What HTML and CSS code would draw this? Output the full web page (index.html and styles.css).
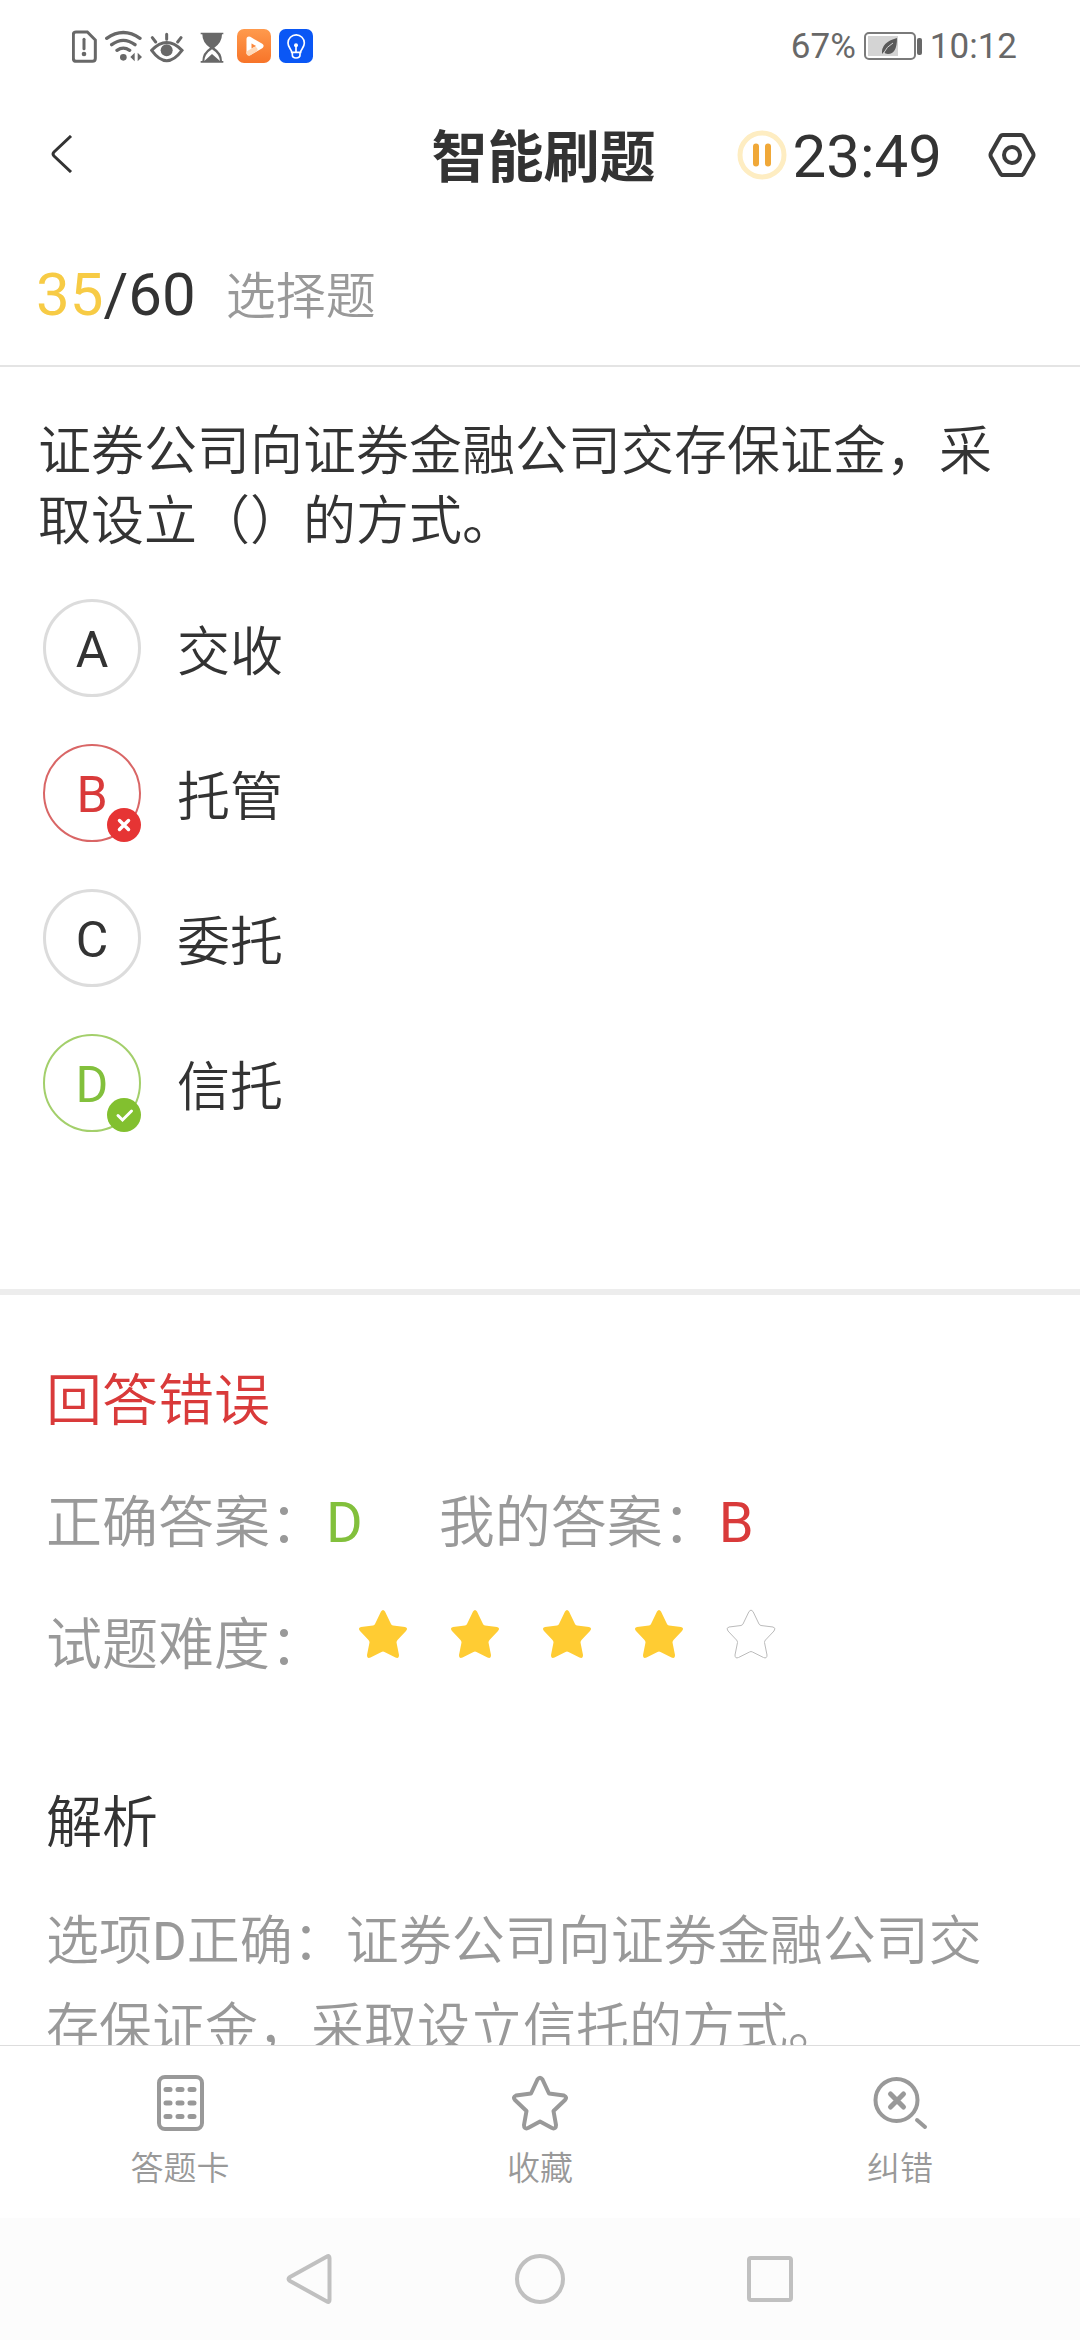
FILE: index.html
```html
<!DOCTYPE html>
<html lang="zh-CN">
<head>
<meta charset="utf-8">
<meta name="viewport" content="width=device-width, initial-scale=1">
<title>智能刷题</title>
<link rel="stylesheet" href="styles.css">
</head>
<body>
<div class="statusbar">
  <div class="status-icons">
    <svg width="25" height="33" viewBox="65 54 75 99" fill="none" stroke="#686868" stroke-width="9"><path d="M75 60H111L135 84V139Q135 148 126 148H78Q69 148 69 139V68Q69 60 77 60Z"/><path d="M101 82V110" stroke-width="9" stroke-linecap="round"/><circle cx="101" cy="126" r="7" fill="#686868" stroke="none"/></svg>
    <svg width="37" height="33" viewBox="166 54 111 99" fill="none" stroke="#686868" stroke-width="10" stroke-linecap="round"><path d="M171 79Q221 44 271 79M186 98Q221 72 256 98M202 115Q221 102 240 115"/><circle cx="221" cy="136" r="10" fill="#686868" stroke="none"/><path d="M242 135L255 122V148ZM264 122L277 135L264 148Z" fill="#686868" stroke="none"/></svg>
    <svg width="34" height="33" viewBox="305 54 102 99" fill="none" stroke="#686868" stroke-width="9" stroke-linecap="round"><path d="M310 115Q355 68 401 115Q355 177 310 115ZM355 67V82M312 77L322 90M398 77L388 90"/><circle cx="355" cy="115" r="18" fill="#686868" stroke="none"/></svg>
    <svg class="icon-hourglass" width="24" height="33" viewBox="450 54 72 99"><path d="M452 62H520V67H516Q516 92 493 107Q516 122 516 147H520V152H452V147H457Q457 122 480 107Q457 92 457 67H452Z" fill="#686868"/><path d="M463 147Q464 126 486 112Q508 126 510 147L486 126Z" fill="#fff"/></svg>
    <svg width="34" height="34" viewBox="1 1 34 34"><defs><linearGradient id="orange" x2="0" y2="1"><stop stop-color="#ff9a4d"/><stop offset="1" stop-color="#f77429"/></linearGradient></defs><rect x="1" y="1" width="34" height="34" rx="7" fill="url(#orange)"/><path d="M13 11L25 18L13 25Z" fill="none" stroke="#fff" stroke-width="5" stroke-linejoin="round"/><path d="M13 25L19 21.500" stroke="#ffd9b8" stroke-width="5" stroke-linecap="round"/></svg>
    <svg width="34" height="34" viewBox="687 57 102 102"><rect x="687" y="57" width="102" height="102" rx="20" fill="#0a57f5"/><path d="M725 127C725 118 714 113 714 99A24 24 0 0 1 763 99C763 113 752 118 752 127ZM727 128V135Q727 144 738 144Q750 144 750 135V128M738 106V126" fill="none" stroke="#fff" stroke-width="5"/><circle cx="738" cy="106" r="6" fill="#fff"/></svg>
  </div>
  <div class="status-info">
    <span>67%</span>
    <svg width="58" height="28" viewBox="0 0 58 28"><rect x="1" y="1" width="50" height="26" rx="4" fill="none" stroke="#7a7a7a" stroke-width="2"/><rect x="4" y="4" width="30" height="20" fill="#d4d4d4"/><path d="M33 6Q33 22 24 22Q21 22 20 20L18 22Q17 10 33 6Z" fill="#595959"/><path d="M19 22Q23 14 29 11" fill="none" stroke="#d4d4d4"/><rect x="53" y="6" width="5" height="17" rx="2" fill="#686868"/></svg>
    <time>10:12</time>
  </div>
</div>

<header class="header">
  <div class="header-left">
    <button class="icon-button" aria-label="返回"><svg width="22" height="38" viewBox="0 0 22 38" fill="none" stroke="#333" stroke-width="3"><path d="M20 1L3 17Q1 19 3 21L20 37"/></svg></button>
  </div>
  <h1 class="title">智能刷题</h1>
  <div class="header-right">
    <button class="timer" aria-label="暂停计时"><svg width="50" height="50" viewBox="0 0 50 50"><circle cx="25" cy="25" r="22" fill="none" stroke="#feedc2" stroke-width="5"/><path d="M19 16.500V33.500M31 16.500V33.500" stroke="#f0a838" stroke-width="6" stroke-linecap="round"/></svg><span>23:49</span></button>
    <button class="icon-button" aria-label="设置"><svg width="48" height="46" viewBox="0 0 48 46" fill="none" stroke="#3b3b3b" stroke-width="4"><path d="M15 3H33Q35 3 36 5L45 21Q46 23 45 25L36 41Q35 43 33 43H15Q13 43 12 41L3 25Q2 23 3 21L12 5Q13 3 15 3Z"/><circle cx="24" cy="23" r="8"/></svg></button>
  </div>
</header>

<main class="content">
  <div class="progress">
    <span class="count"><em>35</em>/60</span>
    <span class="kind">选择题</span>
  </div>

  <section class="question">
    <p class="stem">证券公司向证券金融公司交存保证金，采取设立（）的方式。</p>
    <ul class="options">
      <li><button class="option"><span class="letter">A</span><span class="label">交收</span></button></li>
      <li><button class="option wrong"><span class="letter">B<svg class="badge" viewBox="0 0 34 34"><circle cx="17" cy="17" r="17" fill="#e63434"/><path d="M12.500 12.500L21.500 21.500M21.500 12.500L12.500 21.500" stroke="#fff" stroke-width="3.500" stroke-linecap="round"/></svg></span><span class="label">托管</span></button></li>
      <li><button class="option"><span class="letter">C</span><span class="label">委托</span></button></li>
      <li><button class="option right"><span class="letter">D<svg class="badge" viewBox="0 0 34 34"><circle cx="17" cy="17" r="17" fill="#82c02f"/><path d="M11 17.500L15.500 22L24.500 13" fill="none" stroke="#fff" stroke-width="3" stroke-linecap="round"/></svg></span><span class="label">信托</span></button></li>
    </ul>
  </section>

  <section class="result">
    <h2 class="verdict">回答错误</h2>
    <div class="answers">
      <span>正确答案：<b class="green">D</b></span>
      <span>我的答案：<b class="red">B</b></span>
    </div>
    <div class="difficulty">
      <span>试题难度：</span>
      <svg class="symbols" width="0" height="0"><symbol id="star" viewBox="0 0 50 50"><path d="M23 2.500Q25 -.5 27 2.500L33 15Q33.500 16 35 16.500L47 18Q50.500 19 48 22L39.500 31Q38.500 32 38.500 33.500L41 46Q41 50 37.500 48.500L26.500 43Q25 42 23.500 43L12.500 48.500Q9 50 9 46L11.500 33.500Q11.500 32 10.500 31L2 22Q-.5 19 3 18L15 16.500Q16.500 16 17 15Z"/></symbol></svg>
      <div class="stars" role="img" aria-label="难度四星">
        <svg class="star"><use href="#star"/></svg>
        <svg class="star"><use href="#star"/></svg>
        <svg class="star"><use href="#star"/></svg>
        <svg class="star"><use href="#star"/></svg>
        <svg class="star empty"><use href="#star"/></svg>
      </div>
    </div>
    <h2 class="analysis-title">解析</h2>
    <p class="analysis">选项D正确：证券公司向证券金融公司交存保证金，采取设立信托的方式。</p>
  </section>
</main>

<nav class="tabs">
  <button class="tab"><svg width="56" height="56" viewBox="0 0 56 56" fill="none" stroke="#999" stroke-width="4"><rect x="7" y="2" width="43" height="52" rx="6"/><path d="M14 14.500H18M26 14.500H30M38 14.500H42M14 28H18M26 28H30M38 28H42M14 41.500H18M26 41.500H30M38 41.500H42" stroke-width="5" stroke-linecap="round"/></svg><span>答题卡</span></button>
  <button class="tab"><svg width="56" height="56" viewBox="0 0 56 56" fill="none" stroke="#999" stroke-width="4" stroke-linejoin="round"><path d="M25.500 4.500Q28 1 30.500 4.500L37 18.500L52 20.500Q55.500 22 53 25L41.500 36L44 50Q44 54.500 40 53L28 46.500L16 53Q12 54.500 12 50L14.500 36L3 25Q.5 22 4 20.500L19 18.500Z"/></svg><span>收藏</span></button>
  <button class="tab"><svg width="56" height="56" viewBox="0 0 56 56" fill="none" stroke="#999" stroke-width="4" stroke-linecap="round"><circle cx="24.500" cy="25" r="21"/><path d="M18.500 19L31.500 32M31.500 19L18.500 32" stroke-width="5"/><path d="M45 45L53 52"/></svg><span>纠错</span></button>
</nav>

<div class="navbar">
  <button class="icon-button" aria-label="系统返回"><svg width="50" height="50" viewBox="0 0 50 50" fill="none" stroke="#c0c0c0" stroke-width="4" stroke-linejoin="round"><path d="M42 2.500Q44.500 1 44.500 4V46Q44.500 49 42 47.500L5 27Q2 25 5 23Z"/></svg></button>
  <button class="icon-button" aria-label="主屏幕"><svg width="50" height="50" viewBox="0 0 50 50" fill="none" stroke="#c0c0c0" stroke-width="4"><circle cx="25" cy="25" r="23"/></svg></button>
  <button class="icon-button" aria-label="最近任务"><svg width="50" height="50" viewBox="0 0 50 50" fill="none" stroke="#c0c0c0" stroke-width="4"><rect x="4" y="4" width="42" height="42" rx="2"/></svg></button>
</div>
</body>
</html>
```
FILE: styles.css
```css
* {
  box-sizing: border-box;
}

body {
  display: flex;
  flex-direction: column;
  height: 100vh;
  margin: 0;
  background: #fff;
  color: #333;
  font-family: Roboto, "Noto Sans CJK SC DemiLight", "Noto Sans CJK SC", sans-serif;
  font-size: 53px;
  text-spacing-trim: space-all;
}

button {
  padding: 0;
  border: 0;
  background: none;
  color: inherit;
  font: inherit;
  text-align: left;
}

svg {
  display: block;
  flex: none;
}

h1,
h2,
p,
ul {
  margin: 0;
  padding: 0;
}

.statusbar {
  display: flex;
  justify-content: space-between;
  align-items: center;
  flex: none;
  height: 92px;
  padding: 0 63px 0 72px;
  color: #686868;
  font-size: 35px;
}

.status-icons,
.status-info {
  display: flex;
  align-items: center;
  gap: 8px;
}

.icon-hourglass {
  margin: 0 5px 0 8px;
}

.header {
  display: grid;
  grid-template-columns: 1fr auto 1fr;
  align-items: center;
  flex: none;
  height: 126px;
  padding: 0 44px 0 51px;
}

.title {
  padding-top: 6px;
  font-family: Roboto, "Noto Sans CJK SC", sans-serif;
  font-size: 56px;
  font-weight: 700;
  line-height: 80px;
}

.header-right {
  display: flex;
  justify-content: flex-end;
  align-items: center;
  gap: 46px;
}

.timer {
  display: flex;
  align-items: center;
  gap: 6px;
  font-size: 60px;
  line-height: 70px;
}

.timer span {
  padding-top: 4px;
}

.content {
  flex: 1;
  min-height: 0;
  overflow-y: auto;
  scrollbar-width: none;
}

.progress {
  display: flex;
  align-items: center;
  gap: 30px;
  height: 149px;
  padding: 0 36px;
  border-bottom: 2px solid #e4e4e4;
}

.count {
  padding-top: 6px;
  font-size: 60px;
}

.count em {
  color: #f7cb45;
  font-style: normal;
}

.kind {
  color: #999;
  font-size: 50px;
}

.question {
  padding: 50px 38px 157px;
  border-bottom: 6px solid #ededed;
}

.stem {
  line-height: 70px;
}

.options {
  display: flex;
  flex-direction: column;
  gap: 47px;
  margin-top: 42px;
  padding-left: 5px;
  list-style: none;
}

.option {
  display: flex;
  align-items: center;
  gap: 36px;
  width: 100%;
}

.label {
  padding-top: 10px;
  line-height: 88px;
}

.letter {
  display: flex;
  justify-content: center;
  align-items: center;
  position: relative;
  width: 98px;
  height: 98px;
  padding-top: 3px;
  border: 3px solid #dcdcdc;
  border-radius: 50%;
  font-size: 50px;
}

.wrong .letter {
  border: 2px solid #d96666;
  color: #d93a3a;
}

.right .letter {
  border: 2px solid #a3cf6b;
  color: #82c03c;
}

.badge {
  position: absolute;
  right: -2px;
  bottom: -2px;
  width: 34px;
  height: 34px;
}

.result {
  padding: 65px 46px;
  color: #999;
}

.verdict,
.answers,
.difficulty,
.analysis-title {
  font-size: 56px;
  font-weight: 400;
  line-height: 82px;
}

.verdict,
.red {
  color: #d93a3a;
}

.green {
  color: #82c03c;
}

.answers {
  display: flex;
  gap: 76px;
  margin-top: 40px;
}

.answers b {
  font-weight: 400;
}

.difficulty {
  display: flex;
  margin-top: 40px;
}

.symbols {
  position: absolute;
}

.stars {
  display: flex;
  gap: 42px;
  padding: 5px 0 0 32px;
}

.star {
  width: 50px;
  height: 50px;
  fill: #ffcc33;
}

.star.empty {
  overflow: visible;
  fill: none;
  stroke: #bbb;
}

.analysis-title {
  margin-top: 96px;
  color: #333;
}

.analysis {
  margin-top: 35px;
  line-height: 87px;
}

.tabs {
  display: flex;
  flex: none;
  height: 173px;
  border-top: 1px solid #ddd;
}

.tab {
  display: flex;
  flex: 1;
  flex-direction: column;
  align-items: center;
  gap: 14px;
  padding-top: 29px;
  color: #999;
  font-size: 33px;
  line-height: 48px;
}

.navbar {
  display: flex;
  justify-content: center;
  align-items: center;
  gap: 180px;
  flex: none;
  height: 122px;
  background: #fcfcfc;
}
```
